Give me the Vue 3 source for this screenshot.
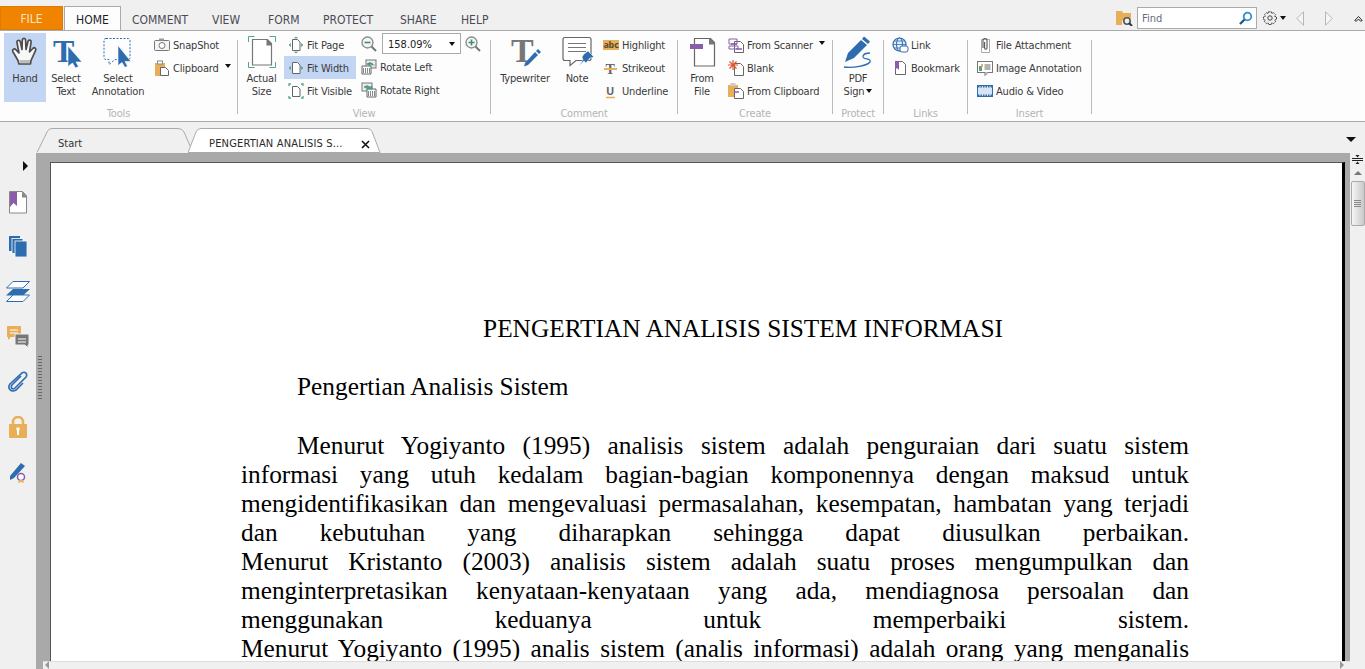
<template>
  <div class="app">
    <header class="menubar">
      <button class="file">FILE</button>
      <div class="tab-home">HOME</div>
      <nav class="menu">
        <span v-for="m in menus" :key="m.t" class="menu-item" :style="{ width: m.w + 'px' }">{{ m.t }}</span>
      </nav>
      <div class="tools-right">
        <svg class="folder" width="17" height="16" viewBox="0 0 17 16"><path d="M0 1h6l1 2h8v5H9l-3 3v4H0z" fill="#e8ae58"/><circle cx="11" cy="11" r="3.2" fill="none" stroke="#555" stroke-width="1.6"/><path d="M13 13l3 3" stroke="#333" stroke-width="2"/></svg>
        <div class="find"><span>Find</span>
          <svg width="14" height="14" viewBox="0 0 14 14"><circle cx="8.5" cy="5.5" r="3.8" fill="none" stroke="#2e8fd0" stroke-width="1.8"/><path d="M5.5 8.500L1 13" stroke="#26578f" stroke-width="2.400"/></svg>
        </div>
        <svg class="gear" width="14" height="14" viewBox="0 0 14 14"><circle cx="7" cy="7" r="2.2" fill="none" stroke="#444"/><path d="M5.5 .8h3l.4 1.8 1.6-.9 2 2-.9 1.6 1.900.5v2.800l-1.900.5.9 1.600-2 2-1.600-.9-.4 1.700h-3l-.4-1.700-1.600.9-2-2 .9-1.600L.5 8.600V5.800l1.900-.5-.9-1.600 2-2 1.600.9z" fill="none" stroke="#444" stroke-dasharray="2 .7"/></svg>
        <i class="caret gear-caret"></i>
        <svg class="nav back" width="8" height="15" viewBox="0 0 8 15"><path d="M7.500.8v13.400L.8 7.500z" fill="#f6f6f6" stroke="#b5b5b5"/></svg>
        <svg class="nav fwd" width="8" height="15" viewBox="0 0 8 15"><path d="M.5.8v13.400l6.700-6.700z" fill="#f6f6f6" stroke="#b5b5b5"/></svg>
        <svg class="collapse" width="9" height="7" viewBox="0 0 9 7"><path d="M.8 5.500L4.500 1.500l3.700 4-1.500.8-2.200-2.300-2.200 2.300z" fill="#fff" stroke="#222"/></svg>
      </div>
    </header>

    <section class="ribbon">
      <!-- Tools -->
      <div class="group" style="width: 237px">
        <div class="group-body tools-body">
          <div class="big active hand-btn">
            <svg class="big-icon" width="28" height="32" viewBox="0 0 28 32"><path d="M7 24.500L1.800 15.500c-1-2 1.700-3.500 3-1.800L8 17 6 6.500c-.4-2.300 2.700-2.900 3.300-.7L11 13.500l.3-9.500c.1-2.300 3.200-2.300 3.300 0l.4 9.500 2-8c.6-2.300 3.500-1.500 3.100.7L18.500 16l3.300-3.500c1.500-1.700 3.900.1 2.700 2.100L20 24.500l-.5 3.500H8z" fill="#f8f8f8" stroke="#4d4d4d" stroke-width="1.700" stroke-linejoin="round"/><path d="M8.500 27h10.500v-3H8.500z" fill="#bdbdbd"/></svg>
            <span>Hand</span>
          </div>
          <div class="big select-text">
            <svg class="big-icon" width="32" height="32" viewBox="0 0 32 32"><text x="3" y="26" class="t-blue">T</text><path d="M18 10l14 16h-6l2.500 4.500-3 1.500-3-5-4.500 3.500z" fill="#2e6cb0" stroke="#fff" stroke-width=".6"/></svg>
            <span>Select<br>Text</span>
          </div>
          <div class="big select-annot">
            <svg class="big-icon" width="30" height="32" viewBox="0 0 30 32"><path d="M3 2.500h22q2 0 2 2v17q0 2-2 2H12l-6 5v-5H3q-2 0-2-2v-17q0-2 2-2z" fill="none" stroke="#2e6cb0" stroke-dasharray="2 1.500"/><path d="M15 9.500l13 16h-6l2.500 4.500-2.500 1.500-3-5-4 3z" fill="#2e6cb0" stroke="#fff" stroke-width=".6"/></svg>
            <span>Select<br>Annotation</span>
          </div>
          <div class="col">
            <div class="small">
              <svg width="16" height="16" viewBox="0 0 16 16"><rect x=".5" y="3.500" width="15" height="10" rx="1" fill="#f4f4f4" stroke="#777"/><rect x="5" y="1.500" width="5" height="2" fill="#999"/><circle cx="8" cy="8.500" r="3" fill="#fff" stroke="#777"/></svg>
              <span>SnapShot</span>
            </div>
            <div class="small">
              <svg width="16" height="16" viewBox="0 0 16 16"><rect x="1" y="3" width="10" height="13" fill="#e8ae58"/><rect x="3.500" y="1" width="5" height="3" fill="#fff" stroke="#888"/><path d="M6.500 7.500h5l3 3v5h-8z" fill="#fff" stroke="#666"/></svg>
              <span>Clipboard</span><i class="caret after"></i>
            </div>
          </div>
        </div>
        <div class="group-label">Tools</div>
      </div>
      <div class="sep"></div>

      <!-- View -->
      <div class="group" style="width: 252px">
        <div class="group-body">
          <div class="big actual">
            <svg class="big-icon" width="30" height="32" viewBox="0 0 30 32"><path d="M1.500 6V.5h6M22.500 .5h6V6M1.500 26v5.500h6M22.500 31.500h6V26" fill="none" stroke="#57a28a"/><path d="M5.500 3.500h15l4 4v21.500h-19z" fill="#fff" stroke="#777" stroke-width="1.200"/><path d="M19.500 3.500h1l4 4v2h-5z" fill="#777"/></svg>
            <span>Actual<br>Size</span>
          </div>
          <div class="col view-col1">
            <div class="small">
              <svg width="16" height="16" viewBox="0 0 16 16"><path d="M4.500 2.500h5l2.500 2.500v8.500H4.500z" fill="#fff" stroke="#666"/><path d="M6.500 1L8 0l1.500 1zM6.500 15L8 16l1.500-1zM2.500 6.500L1 8l1.500 1.500zM13.500 6.500L15 8l-1.500 1.500z" fill="#57a28a" stroke="#57a28a" stroke-width=".7"/></svg>
              <span>Fit Page</span>
            </div>
            <div class="small active">
              <svg width="16" height="16" viewBox="0 0 16 16"><path d="M4.500 2.500h5l2.500 2.500v8.500H4.500z" fill="#fff" stroke="#666"/><path d="M2.500 6.500L1 8l1.500 1.500zM13.500 6.500L15 8l-1.500 1.500z" fill="#57a28a" stroke="#57a28a" stroke-width=".7"/></svg>
              <span>Fit Width</span>
            </div>
            <div class="small">
              <svg width="16" height="16" viewBox="0 0 16 16"><path d="M4.500 3.500h5l2.500 2.500v7.500H4.500z" fill="#fff" stroke="#666"/><path d="M1 3V1h2M15 3V1h-2M1 13v2h2M15 13v2h-2" fill="none" stroke="#57a28a" stroke-width="1.300"/></svg>
              <span>Fit Visible</span>
            </div>
          </div>
          <div class="col view-col2">
            <div class="zoom-row">
              <svg width="16" height="16" viewBox="0 0 16 16"><circle cx="6.500" cy="6.500" r="5.500" fill="#f5f5f5" stroke="#888" stroke-width="1.300"/><path d="M10.500 10.500l4.500 4.500" stroke="#777" stroke-width="2"/><path d="M3.500 6.500h6" stroke="#3d8f72" stroke-width="1.600"/></svg>
              <div class="zoom-box"><span>158.09%</span><i class="caret"></i></div>
              <svg width="16" height="16" viewBox="0 0 16 16"><circle cx="6.500" cy="6.500" r="5.500" fill="#f5f5f5" stroke="#888" stroke-width="1.300"/><path d="M10.500 10.500l4.500 4.500" stroke="#777" stroke-width="2"/><path d="M3.500 6.500h6M6.500 3.500v6" stroke="#3d8f72" stroke-width="1.600"/></svg>
            </div>
            <div class="small">
              <svg width="16" height="16" viewBox="0 0 16 16"><rect x="5" y="1" width="10" height="8" fill="#eee" stroke="#777"/><path d="M1 7h9v8H1z" fill="#fff" stroke="#666"/><path d="M2.500 9v5M4.500 9v5M6.500 9v5M8.500 9v5" stroke="#888"/><path d="M6 5q3-3 6 0l-2 1h4M6 5l3-1v3z" fill="#57a28a" stroke="#3d8f72" stroke-width=".6"/></svg>
              <span>Rotate Left</span>
            </div>
            <div class="small">
              <svg width="16" height="16" viewBox="0 0 16 16"><rect x="1" y="1" width="10" height="8" fill="#eee" stroke="#777"/><path d="M6 7h9v8H6z" fill="#fff" stroke="#666"/><path d="M7.500 9v5M9.500 9v5M11.500 9v5M13.500 9v5" stroke="#888"/><path d="M3 5q3-3 6 0l2-1v3H7z" fill="#57a28a" stroke="#3d8f72" stroke-width=".6"/></svg>
              <span>Rotate Right</span>
            </div>
          </div>
        </div>
        <div class="group-label">View</div>
      </div>
      <div class="sep"></div>

      <!-- Comment -->
      <div class="group" style="width: 186px">
        <div class="group-body">
          <div class="big typewriter">
            <svg class="big-icon" width="36" height="32" viewBox="0 0 36 32"><text x="4" y="26" class="t-gray">T</text><path d="M18 27l10-11 3 3-10 10-4 1.500z" fill="#2e6cb0"/><path d="M29 15l2-2 3 3-2 2z" fill="#2e6cb0"/></svg>
            <span>Typewriter</span>
          </div>
          <div class="big note">
            <svg class="big-icon note-icon" width="34" height="34" viewBox="0 0 34 34"><path d="M5 1.500h24q2 0 2 2v19q0 2-2 2H16l-6 5v-5H5q-2 0-2-2v-19q0-2 2-2z" fill="#fff" stroke="#666" stroke-width="1.200"/><path d="M8 7.500h18M8 11.500h18M8 15.500h18" stroke="#777"/><path d="M24 18l4-3 6 6-4 1-4 5-2-2-5 5 4-6-1-3z" fill="#2e6cb0" stroke="#fff" stroke-width=".5"/></svg>
            <span>Note</span>
          </div>
          <div class="col comment-col">
            <div class="small">
              <span class="abc">abc</span>
              <span>Highlight</span>
            </div>
            <div class="small">
              <svg width="16" height="16" viewBox="0 0 16 16"><text x="2.500" y="14" class="t-strike">T</text><path d="M1 9h13" stroke="#e8ae58" stroke-width="2"/></svg>
              <span>Strikeout</span>
            </div>
            <div class="small">
              <svg width="16" height="16" viewBox="0 0 16 16"><text x="3" y="12" class="t-under">U</text><path d="M3 14.500h9" stroke="#e8ae58" stroke-width="1.500"/></svg>
              <span>Underline</span>
            </div>
          </div>
        </div>
        <div class="group-label">Comment</div>
      </div>
      <div class="sep"></div>

      <!-- Create -->
      <div class="group" style="width: 154px">
        <div class="group-body">
          <div class="big from-file">
            <svg class="big-icon" width="28" height="32" viewBox="0 0 28 32"><path d="M6.500 2.500h16l4 4v23.500h-20z" fill="#fff" stroke="#666" stroke-width="1.200"/><path d="M21 2.500h1.500l4 4v2H21z" fill="#777"/><rect x="2" y="8" width="13" height="5" fill="#8b5ca8"/></svg>
            <span>From<br>File</span>
          </div>
          <div class="col create-col">
            <div class="small">
              <svg width="16" height="16" viewBox="0 0 16 16"><path d="M6.500 4.500h6l3 3v8h-9z" fill="#fff" stroke="#666"/><path d="M1 2h8v5H1zM1 9h9v3H1z" fill="none" stroke="#8b5ca8"/><path d="M3 7h6M8 12h6" stroke="#8b5ca8" stroke-width="1.500"/></svg>
              <span>From Scanner</span><i class="caret after"></i>
            </div>
            <div class="small">
              <svg width="16" height="16" viewBox="0 0 16 16"><path d="M6.500 3.500h6l3 3v9h-9z" fill="#fff" stroke="#666"/><path d="M5 0v10M0 5h10M1.500 1.500l7 7M8.500 1.500l-7 7" stroke="#e2572f" stroke-width="1.200"/></svg>
              <span>Blank</span>
            </div>
            <div class="small">
              <svg width="16" height="16" viewBox="0 0 16 16"><rect x="0" y="2" width="10" height="12" fill="#e8ae58"/><rect x="2.500" y="0" width="5" height="3" fill="#ccc"/><path d="M6.500 5.500h6l3 3v7h-9z" fill="#fff" stroke="#666"/><path d="M6 9h5" stroke="#8b5ca8" stroke-width="1.500"/></svg>
              <span>From Clipboard</span>
            </div>
          </div>
        </div>
        <div class="group-label">Create</div>
      </div>
      <div class="sep"></div>

      <!-- Protect -->
      <div class="group" style="width: 50px">
        <div class="group-body">
          <div class="big pdf-sign">
            <svg class="big-icon" width="32" height="32" viewBox="0 0 32 32"><path d="M3 26l3-9L19 4l6 5-13 13z" fill="#2e6cb0"/><path d="M20 3l2-2.500 6 5-2 2.500z" fill="#2e6cb0"/><path d="M2 31c9 1 23-1 26-5 2-4-8-2-7-6 1-3 5-3 7-3" fill="none" stroke="#2e6cb0" stroke-width="1.300"/></svg>
            <span>PDF<br>Sign<i class="caret inline"></i></span>
          </div>
        </div>
        <div class="group-label">Protect</div>
      </div>
      <div class="sep"></div>

      <!-- Links -->
      <div class="group" style="width: 83px">
        <div class="group-body">
          <div class="col links-col">
            <div class="small">
              <svg width="16" height="16" viewBox="0 0 16 16"><circle cx="7.500" cy="7.500" r="6.500" fill="#e4eef8" stroke="#2e6cb0" stroke-width="1.200"/><ellipse cx="7.500" cy="7.500" rx="3" ry="6.500" fill="none" stroke="#2e6cb0"/><path d="M1 7.500h13M2 4h11M2 11h11" stroke="#2e6cb0" stroke-width=".8"/><rect x="8" y="9" width="8" height="6" rx="2" fill="#fff" stroke="#2e6cb0"/></svg>
              <span>Link</span>
            </div>
            <div class="small">
              <svg width="16" height="16" viewBox="0 0 16 16"><path d="M3.500 1.500h7l3 3v10h-10z" fill="#fff" stroke="#666"/><path d="M3 1h4v9L5 8 3 10z" fill="#8b5ca8"/></svg>
              <span>Bookmark</span>
            </div>
          </div>
        </div>
        <div class="group-label">Links</div>
      </div>
      <div class="sep"></div>

      <!-- Insert -->
      <div class="group" style="width: 123px">
        <div class="group-body">
          <div class="col insert-col">
            <div class="small">
              <svg width="16" height="16" viewBox="0 0 16 16"><path d="M4.500 2.500h8v13h-8z" fill="#fff" stroke="#888" opacity=".7"/><path d="M6 11V3.500a2 2 0 0 1 4 0V11a1.200 1.200 0 0 1-2.400 0V5" fill="none" stroke="#555" stroke-width="1.100"/></svg>
              <span>File Attachment</span>
            </div>
            <div class="small">
              <svg width="16" height="16" viewBox="0 0 16 16"><rect x=".5" y="1.500" width="15" height="11" fill="#fff" stroke="#777"/><rect x="2" y="6" width="3" height="5" fill="#57a28a"/><rect x="4" y="4" width="2" height="3" fill="#e8ae58"/><path d="M7.500 5h6M7.500 7h6M7.500 9h6" stroke="#666"/><path d="M8 12.500v3l3-3" fill="#fff" stroke="#777"/></svg>
              <span>Image Annotation</span>
            </div>
            <div class="small">
              <svg width="16" height="12" viewBox="0 0 16 12"><rect x=".5" y=".5" width="15" height="11" fill="#d6e4f4" stroke="#2e6cb0"/><path d="M1 1.500h14M1 10.500h14" stroke="#2e6cb0" stroke-width="2" stroke-dasharray="1.500 1"/></svg>
              <span>Audio &amp; Video</span>
            </div>
          </div>
        </div>
        <div class="group-label">Insert</div>
      </div>
      <div class="sep"></div>
    </section>

    <section class="tabbar">
      <div class="doc-tab start-tab">
        <svg class="tab-shape" width="158" height="25" viewBox="0 0 158 25"><path d="M0 24.500L10 4q1.500-3.500 5-3.500h126q4 0 6 3.500l9 20.500" fill="#f0f0f0" stroke="#aaa"/></svg>
        <span>Start</span>
      </div>
      <div class="doc-tab active-tab">
        <svg class="tab-shape" width="193" height="25" viewBox="0 0 193 25"><path d="M0 24.500L8 4q1.500-3.500 5-3.500h166q4 0 5 3l8 21z" fill="#fff" stroke="#aaa"/></svg>
        <span>PENGERTIAN ANALISIS S...</span>
        <svg class="close" width="9" height="9" viewBox="0 0 9 9"><path d="M1 1l7 7M8 1L1 8" stroke="#111" stroke-width="1.600"/></svg>
      </div>
      <i class="caret tab-menu"></i>
    </section>

    <main class="main">
      <aside class="sidebar">
        <i class="side-arrow"></i>
        <svg width="18" height="23" viewBox="0 0 18 23"><path d="M.5.500h13l4 4v17.500H.5z" fill="#fff" stroke="#888"/><path d="M13 .500l4.500 4.500v1.500H13z" fill="#888"/><path d="M1 1h7v14l-3.500-3L1 16z" fill="#8b5ca8"/></svg>
        <svg width="18" height="21" viewBox="0 0 18 21"><rect x="0" y="0" width="11" height="15" fill="#2e6cb0"/><rect x="3" y="2.500" width="11" height="15" fill="#2e6cb0" stroke="#fff" stroke-width=".8"/><rect x="6" y="5" width="12" height="16" fill="#2e6cb0" stroke="#fff" stroke-width=".8"/></svg>
        <svg width="24" height="21" viewBox="0 0 24 21"><path d="M7 .500h16.500L17 7H.5z" fill="#fff" stroke="#2e6cb0"/><path d="M7 8h17l-7 6.500H0z" fill="#2e6cb0"/><path d="M7 14h16.500L17 20.500H.5z" fill="#fff" stroke="#2e6cb0"/></svg>
        <svg width="22" height="22" viewBox="0 0 22 22"><path d="M0 0h14v11H4l-3 3v-3H0z" fill="#e8ae58"/><path d="M3 4h8M3 7h8" stroke="#fff"/><path d="M8 8h14v11h-1v3l-3-3H8z" fill="#777" stroke="#f0f0f0"/><path d="M11 13h8M11 16h8" stroke="#fff"/></svg>
        <svg width="21" height="21" viewBox="0 0 21 21"><path d="M13 5L4 14c-2 3 1 5 3 3L18 6c2-3-1-6-4-4L2 13c-3 4 1 9 6 6l7-7" fill="none" stroke="#2e6cb0" stroke-width="1.600"/></svg>
        <svg width="18" height="23" viewBox="0 0 18 23"><path d="M4 10V6a5 5 0 0 1 10 0v4" fill="none" stroke="#e8ae58" stroke-width="2.500"/><rect x="0" y="8" width="18" height="14" rx="1" fill="#e8ae58"/><circle cx="9" cy="13" r="1.800" fill="#fff"/><rect x="8" y="13" width="2" height="6" fill="#fff"/></svg>
        <svg width="20" height="22" viewBox="0 0 20 22"><path d="M2 15L13 2l4 3L6 17l-4 2z" fill="#2e6cb0"/><circle cx="13" cy="16" r="3.500" fill="#fff" stroke="#8b5ca8" stroke-width="1.500"/><path d="M11 19l-1 3 3-1 3 1-1-3" fill="#e8ae58"/></svg>
      </aside>

      <div class="doc">
        <div class="doc-area">
          <i class="grip"></i>
          <article class="page">
            <h1 class="title">PENGERTIAN ANALISIS SISTEM INFORMASI</h1>
            <h2 class="subtitle">Pengertian Analisis Sistem</h2>
            <div class="para">
              <div v-for="(l, i) in lines" :key="i" class="line" :class="{ first: i === 0 }">{{ l }}</div>
            </div>
          </article>
        </div>
        <div class="hscroll">
          <i class="h-arrow left"></i>
          <i class="h-arrow right"></i>
        </div>
      </div>

      <div class="vscroll">
        <svg class="split" width="11" height="9" viewBox="0 0 11 9"><path d="M0 3.500h11M0 5.500h11" stroke="#222"/><path d="M3.500 0h4L5.500 2.500zM3.500 9h4L5.500 6.500z" fill="#222"/></svg>
        <i class="up-arrow"></i>
        <div class="thumb"><b></b><b></b><b></b><b></b></div>
      </div>
    </main>
  </div>
</template>

<script setup>
const menus = [
  { t: 'COMMENT', w: 80 },
  { t: 'VIEW', w: 56 },
  { t: 'FORM', w: 55 },
  { t: 'PROTECT', w: 77 },
  { t: 'SHARE', w: 61 },
  { t: 'HELP', w: 40 }
]
const lines = [
  'Menurut Yogiyanto (1995) analisis sistem adalah penguraian dari suatu sistem',
  'informasi yang utuh kedalam bagian-bagian komponennya dengan maksud untuk',
  'mengidentifikasikan dan mengevaluasi permasalahan, kesempatan, hambatan yang terjadi',
  'dan kebutuhan yang diharapkan sehingga dapat diusulkan perbaikan.',
  'Menurut Kristanto (2003) analisis sistem adalah suatu proses mengumpulkan dan',
  'menginterpretasikan kenyataan-kenyataan yang ada, mendiagnosa persoalan dan',
  'menggunakan keduanya untuk memperbaiki sistem.',
  'Menurut Yogiyanto (1995) analis sistem (analis informasi) adalah orang yang menganalis'
]
</script>

<style>
html, body { margin: 0; overflow: hidden; }
</style>

<style scoped>
.app {
  width: 1365px;
  height: 669px;
  display: flex;
  flex-direction: column;
  overflow: hidden;
  background: #f0f0f0;
  font-family: "DejaVu Sans Condensed", "DejaVu Sans", sans-serif;
  font-stretch: condensed;
  font-size: 11px;
  color: #3a3a3a;
}

/* top menu */
.menubar {
  height: 24px;
  padding-top: 6px;
  display: flex;
  align-items: stretch;
  flex: none;
}
.file {
  width: 63px;
  border: 0;
  padding: 2px 0 0;
  background: #f08300;
  color: #f6e4c8;
  font-family: inherit;
  font-stretch: condensed;
  font-size: 12px;
  box-shadow: inset 0 0 0 1px #e07a00;
}
.tab-home {
  width: 57px;
  margin-left: 1px;
  height: 24px;
  box-sizing: border-box;
  background: #fdfdfd;
  border: 1px solid #aaa;
  border-bottom: 0;
  text-align: center;
  line-height: 27px;
  font-size: 12px;
  color: #1c1c2a;
  position: relative;
  z-index: 1;
}
.menu { display: flex; padding-left: 11px; font-size: 12px; color: #4b4b55; line-height: 28px; }
.menu-item { display: block; }
.tools-right { margin-left: auto; position: relative; width: 250px; display: flex; align-items: center; }
.folder { margin-left: 1px; }
.find {
  width: 120px;
  height: 22px;
  box-sizing: border-box;
  margin-left: 4px;
  background: #fff;
  border: 1px solid #aaa;
  display: flex;
  align-items: center;
  justify-content: space-between;
  padding: 0 3px 0 4px;
  color: #666c80;
  font-size: 11px;
}
.gear { margin-left: 6px; }
.gear-caret { margin-left: 3px; }
.nav.back { margin-left: 10px; }
.nav.fwd { margin-left: 21px; }
.collapse { margin-left: 21px; }

.caret {
  display: inline-block;
  width: 0;
  height: 0;
  border: 3.5px solid transparent;
  border-top: 4px solid #111;
  border-bottom: 0;
}
.caret.after { margin-left: 3px; margin-top: -3px; }
.caret.inline { margin-left: 2px; vertical-align: 2px; }

/* ribbon */
.ribbon {
  flex: none;
  height: 92px;
  box-sizing: border-box;
  background: #fdfdfd;
  border-top: 1px solid #aaa;
  border-bottom: 1px solid #aaa;
  display: flex;
  letter-spacing: -0.18px;
}
.group { display: flex; flex-direction: column; }
.group-body { display: flex; height: 76px; padding-top: 2px; box-sizing: border-box; }
.group-label { text-align: center; color: #b4b4b4; line-height: 13px; }
.sep { width: 1px; background: #bbb; margin: 9px 0 7px; flex: none; }

.big {
  display: flex;
  flex-direction: column;
  align-items: center;
  height: 69px;
  line-height: 13px;
  text-align: center;
  flex: none;
  white-space: nowrap;
}
.big-icon { height: 32px; margin: 3px 0 4px; flex: none; overflow: visible; }
.note-icon { height: 34px; margin-bottom: 2px; }
.active { background: #c2d5f2; }
.hand-btn { width: 42px; margin-left: 4px; }
.select-text { width: 40px; }
.select-annot { width: 60px; margin-left: 2px; }
.actual { width: 47px; }
.typewriter { width: 68px; }
.note { width: 36px; }
.from-file { width: 48px; }
.pdf-sign { width: 50px; }

.col { display: flex; flex-direction: column; flex: none; }
.tools-body .col { margin-left: 4px; }
.small {
  height: 23px;
  display: flex;
  align-items: center;
  gap: 3px;
  padding: 0 2px;
  white-space: nowrap;
}
.small svg { flex: none; overflow: visible; }
.small > span:not(.abc) { padding-top: 2px; }
.view-col1 { width: 72px; margin-left: -1px; }
.view-col1 .small { padding-left: 4px; }
.view-col2 { margin-left: 3px; }
.zoom-row { height: 22px; display: flex; align-items: center; padding: 0 2px; gap: 5px; }
.zoom-box {
  width: 79px;
  height: 21px;
  margin-top: -1px;
  box-sizing: border-box;
  background: #fff;
  border: 1px solid #aaa;
  display: flex;
  align-items: center;
  justify-content: space-between;
  padding: 0 5px;
  color: #222;
  letter-spacing: 0;
}
.zoom-box span { padding-top: 2px; }
.zoom-box + svg { margin-left: -1px; }
.comment-col { margin-left: 6px; }
.abc {
  width: 16px;
  height: 10px;
  background: #e8ae58;
  color: #5a4a30;
  font-family: "Noto Sans", sans-serif;
  font-weight: 700;
  font-size: 9px;
  line-height: 10px;
  text-align: center;
}
.links-col { margin-left: 6px; }
.insert-col { margin-left: 7px; }

.t-blue { font: bold 32px "Liberation Serif", serif; fill: #2e6cb0; }
.t-gray { font: bold 34px "Liberation Serif", serif; fill: #777; }
.t-strike { font: bold 14px "Liberation Serif", serif; fill: #666; }
.t-under { font: bold 11px "Noto Sans", sans-serif; fill: #666; }

/* document tabs */
.tabbar {
  flex: none;
  height: 31px;
  display: flex;
  align-items: flex-end;
  padding-left: 37px;
  position: relative;
}
.doc-tab { position: relative; height: 24px; display: flex; align-items: center; color: #333; white-space: nowrap; }
.doc-tab span { position: relative; padding-top: 4px; }
.tab-shape { position: absolute; left: 0; top: -1px; }
.start-tab { width: 130px; padding-left: 21px; }
.active-tab { width: 172px; padding-left: 21px; color: #2a2a2a; letter-spacing: 0.17px; }
.close { position: relative; margin-left: auto; margin-top: 6px; margin-right: 11px; }
.tab-menu { position: absolute; right: 9px; top: 15px; border-width: 5px 5px 0; border-top-color: #111; }

/* main */
.main { flex: 1; display: flex; min-height: 0; }
.sidebar {
  width: 36px;
  flex: none;
  display: grid;
  grid-auto-rows: 45px;
  justify-items: center;
  position: relative;
  padding-top: 38px;
  box-sizing: border-box;
}
.side-arrow {
  position: absolute;
  left: 23px;
  top: 8px;
  border: 5px solid transparent;
  border-left: 5px solid #111;
  border-right: 0;
}
.doc { flex: 1; display: flex; flex-direction: column; min-width: 0; background: #a9a9a9; }
.doc-area { flex: 1; min-height: 0; padding: 9px 5px 0 14px; position: relative; display: flex; }
.grip {
  position: absolute;
  left: 2px;
  top: 202px;
  width: 4px;
  height: 44px;
  background-image: radial-gradient(#666 0.7px, transparent 0.8px);
  background-size: 2px 3px;
}
.page {
  flex: 1;
  background: #fff;
  border-top: 1px solid #555;
  border-left: 1px solid #555;
  border-right: 3px solid #000;
  padding: 151px 153px 0 190px;
  overflow: hidden;
  font-family: "Liberation Serif", "Times New Roman", serif;
  font-stretch: normal;
  font-size: 25.33px;
  line-height: 29px;
  color: #000;
}
.title, .subtitle { margin: 0; font-weight: 400; font-size: inherit; padding-left: 56px; }
.title { text-align: center; margin-bottom: 29px; }
.subtitle { margin-bottom: 30px; }
.line { text-align: justify; text-align-last: justify; white-space: nowrap; }
.line.first { padding-left: 56px; }

.hscroll {
  flex: none;
  height: 8px;
  margin-left: 7px;
  background: #f0f0f0;
  border-top: 1px solid #ddd;
  display: flex;
  justify-content: space-between;
  align-items: flex-end;
  padding: 0 6px 0 2px;
  box-sizing: border-box;
}
.h-arrow { width: 0; height: 0; border: 4px solid transparent; }
.h-arrow.left { border-right: 4px solid #999; border-left: 0; }
.h-arrow.right { border-left: 4px solid #999; border-right: 0; }

.vscroll { width: 15px; flex: none; background: #f0f0f0; display: flex; flex-direction: column; align-items: center; }
.split { margin-top: 2px; flex: none; }
.up-arrow { margin-top: 7px; border: 4px solid transparent; border-bottom: 4px solid #777; border-top: 0; width: 0; height: 0; }
.thumb {
  margin-top: 6px;
  width: 14px;
  height: 45px;
  box-sizing: border-box;
  border: 1px solid #aaa;
  border-radius: 2px;
  background: linear-gradient(90deg, #f6f6f6, #c8c8c8);
  display: flex;
  flex-direction: column;
  justify-content: center;
  align-items: center;
  gap: 1px;
}
.thumb b { display: block; width: 7px; height: 1px; background: #888; }
</style>
